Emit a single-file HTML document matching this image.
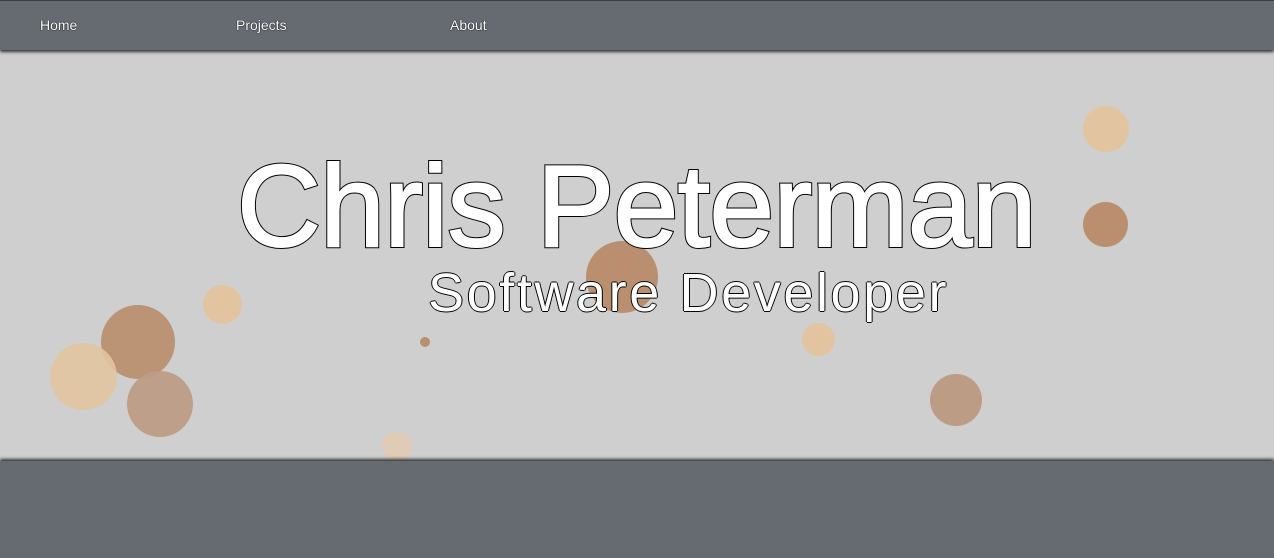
<!DOCTYPE html>
<html><head><style>
html,body{margin:0;padding:0;width:1274px;height:558px;overflow:hidden;background:#cfcfcf;font-family:"Liberation Sans",sans-serif;}
.hdr{position:absolute;left:0;top:0;width:1274px;height:49px;background:#656b71;border-top:1px solid #3a3e42;box-shadow:0 2px 3px #333;z-index:3}
.hdr span{position:absolute;top:16px;font-size:14px;color:#fff;text-shadow:0 0 1px #000,0 0 1px #000}
.ftr{position:absolute;left:0;top:461px;width:1274px;height:97px;background:#656b71;box-shadow:0 -2px 3px #333;z-index:3}
.c{position:absolute;border-radius:50%}
.t{position:absolute;color:#fff;white-space:nowrap;text-shadow:-1px 0 #000,1px 0 #000,0 -1px #000,0 1px #000;z-index:2}
.ti{position:absolute;left:237px;top:144px;font-size:116px;line-height:124px;letter-spacing:-0.5px;color:#fff;white-space:nowrap;z-index:2}
</style></head><body>
<div class="hdr"><span style="left:40px">Home</span><span style="left:236px">Projects</span><span style="left:450px">About</span></div>
<div class="c" style="left:1083px;top:106px;width:46px;height:46px;background:#e2c4a0"></div>
<div class="c" style="left:1083px;top:202px;width:45px;height:45px;background:#b98f70"></div>
<div class="c" style="left:586px;top:241px;width:72px;height:72px;background:#b98f70"></div>
<div class="c" style="left:203px;top:285px;width:39px;height:39px;background:#e2c4a0"></div>
<div class="c" style="left:101px;top:305px;width:74px;height:74px;background:#b98f70;opacity:.95"></div>
<div class="c" style="left:50px;top:343px;width:67px;height:67px;background:#e2c4a0;opacity:.9"></div>
<div class="c" style="left:127px;top:371px;width:66px;height:66px;background:#bd9c85;opacity:.95"></div>
<div class="c" style="left:420px;top:337px;width:10px;height:10px;background:#b98f70"></div>
<div class="c" style="left:802px;top:323px;width:33px;height:33px;background:#e2c4a0"></div>
<div class="c" style="left:930px;top:374px;width:52px;height:52px;background:#bd9c85"></div>
<div class="c" style="left:382px;top:431px;width:30px;height:30px;background:#e0ccb6"></div>
<div class="ti" style="-webkit-text-stroke:4px #000" aria-hidden="true">Chris Peterman</div>
<div class="ti" style="-webkit-text-stroke:2px #fff">Chris Peterman</div>
<div class="t" style="left:428px;top:263px;font-size:54px;line-height:60px;letter-spacing:2.6px">Software Developer</div>
<div class="ftr"></div>
</body></html>
